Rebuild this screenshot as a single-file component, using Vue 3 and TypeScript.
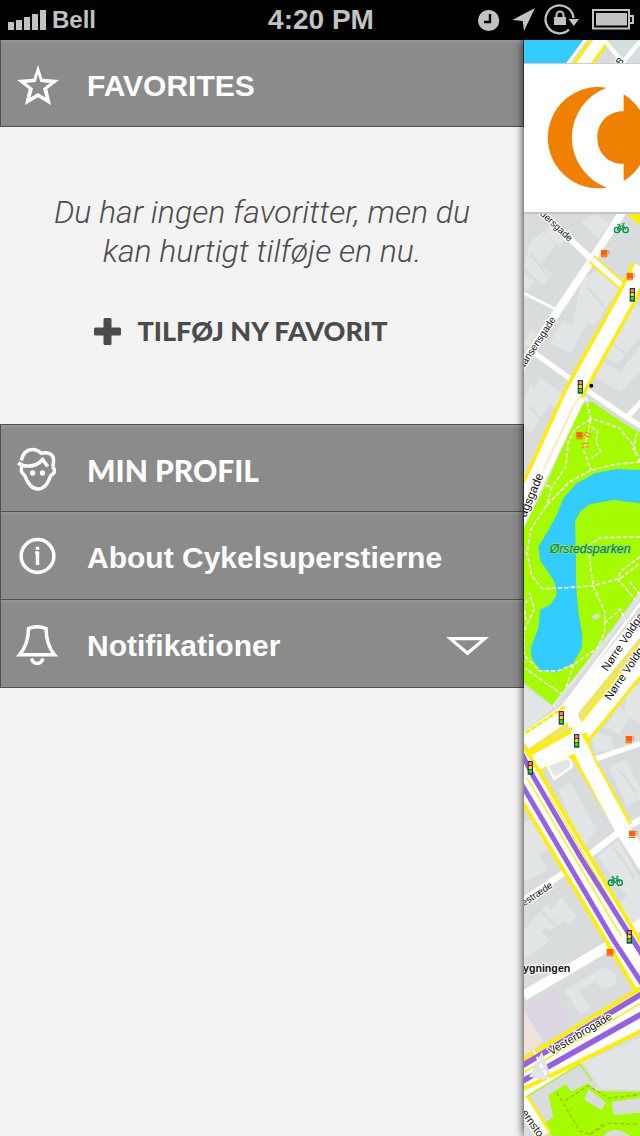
<script setup lang="ts">
interface Spot { x: number; y: number }

const signals: Spot[] = [
  { x: 367, y: 764 }, { x: 211, y: 1040 }, { x: 154, y: 2033 }, { x: 200, y: 2102 },
  { x: 61, y: 2183 }, { x: 358, y: 2690 },
]
const cafes: Spot[] = [
  { x: 283, y: 640 }, { x: 360, y: 709 }, { x: 209, y: 1186 }, { x: 357, y: 2098 },
  { x: 367, y: 2382 }, { x: 300, y: 2737 },
]
const bikes: Spot[] = [{ x: 334, y: 564 }, { x: 316, y: 2522 }]
</script>

<template>
  <div class="screen">
    <div class="status">
      <div class="carrier">
        <svg width="38" height="20" viewBox="0 0 38 20" aria-hidden="true">
          <path d="M0 12h6v8H0zM8 10h6v10H8zM16 7h6v13h-6zM24 4h6v16h-6zM32 0h6v20h-6z" />
        </svg>
        <span>Bell</span>
      </div>
      <time>4:20 PM</time>
      <svg class="indicators" width="158" height="40" viewBox="476 0 158 40" aria-hidden="true">
        <circle cx="488.7" cy="20.5" r="10.6" />
        <path d="M490 14v8h-6" fill="none" stroke="#000" stroke-width="2.4" />
        <path d="M535 8 512.300 20l10.400 1 1.300 10z" />
        <path d="M569 29.700A14 14 0 1 1 573.500 18" fill="none" stroke="#c2c2c2" stroke-width="2.300" />
        <path d="M568.500 19h10.500l-5.200 7z" />
        <path d="M554 17h12v8h-12z" />
        <path d="M556.500 17.500v-2.500a3.500 3.500 0 0 1 7 0v2.500" fill="none" stroke="#c2c2c2" stroke-width="2" />
        <path d="M593 10h36v6h4v7h-4v5.500h-36z" fill="none" stroke="#c2c2c2" stroke-width="2" />
        <path d="M629 15v9" stroke="#c2c2c2" stroke-width="2" />
        <path d="M596 13h31v12.500h-31z" />
      </svg>
    </div>

    <div class="body">
      <aside class="menu">
        <h2 class="row heading">
          <svg class="icon" viewBox="0 0 42 44" aria-hidden="true">
            <path fill="#fff" fill-rule="evenodd" d="M21 4 25.500 17.700 42 19 30.300 28 34 44 21 36.300 8 44 11.700 28 0 19 16.500 17.700zM21 13 18.700 21 9 22 16 27.500 13.500 36.500 21 32 28.500 36.500 26 27.500 33 22 23.300 21z" />
          </svg>
          <span>FAVORITES</span>
        </h2>

        <section class="empty">
          <p>Du har ingen favoritter, men du kan hurtigt tilføje en nu.</p>
          <button type="button" class="add">
            <svg width="27" height="27" viewBox="0 0 27 27" aria-hidden="true">
              <path d="M11 0h5q1.500 0 1.500 1.500v8h8q1.500 0 1.500 1.500v5q0 1.500-1.500 1.500h-8v8q0 1.500-1.500 1.500h-5q-1.500 0-1.500-1.500v-8h-8Q0 17.500 0 16v-5q0-1.500 1.500-1.500h8v-8Q9.500 0 11 0z" fill="#4b4b4b" />
            </svg>
            <span>TILFØJ NY FAVORIT</span>
          </button>
        </section>

        <nav>
          <button type="button" class="row rounded">
            <svg class="icon line" viewBox="0 0 42 44" aria-hidden="true">
              <path d="M4.300 14.500C6 7 10 3.500 15.700 3.500c4 0 6 1.500 8.500 3.700C31 5.500 36 8 36.500 13c.5 3-.5 4.500-.5 7.500" />
              <path d="M1.200 17c5.800 4.500 17.500 4.700 24.500-3.500l5 7" />
              <path d="M5 19.500c-.5 2-1.200 4-.5 6 .7 2.200 2.500 2.500 3.300 4.200C10.500 37 14.500 43 20.700 43c6.300 0 10.300-5.500 12.600-12.500.7-2 3.500-2.300 4-4.700.4-2.300-.3-3.600-1.800-5.300" />
              <circle cx="15.700" cy="27" r="2.700" fill="#fff" stroke="none" />
              <circle cx="25.500" cy="27" r="2.700" fill="#fff" stroke="none" />
            </svg>
            <span>MIN PROFIL</span>
          </button>
          <button type="button" class="row">
            <svg class="icon line" viewBox="0 0 42 44" aria-hidden="true">
              <circle cx="20.500" cy="22" r="16.400" />
              <path d="M20.500 17.500V31" />
              <path d="M18 18.400h3" stroke-width="2" />
              <path d="M20.500 12.800v3" />
            </svg>
            <span>About Cykelsuperstierne</span>
          </button>
          <button type="button" class="row">
            <svg class="icon line" viewBox="0 0 42 44" aria-hidden="true">
              <path d="M11.500 6.500c5-2.300 12.500-2.300 17.500 0 .2 12 3.300 20 8.500 26.300H2.500C8 26.500 11.300 19 11.500 6.500z" />
              <path d="M14.500 36.500c2 6.500 9.500 6.500 11.500 0" />
            </svg>
            <span>Notifikationer</span>
            <svg class="chevron" width="43" height="24" viewBox="0 0 43 24" aria-hidden="true">
              <path fill="#fff" fill-rule="evenodd" d="M0 5h43L21.500 23.500zM8.500 8.300 21.500 19 34.500 8.300z" />
            </svg>
          </button>
        </nav>
      </aside>

      <main class="map">
        <svg class="canvas" viewBox="42 0 348 3288" preserveAspectRatio="xMinYMin slice" role="img" aria-label="Map">
          <rect x="42" width="348" height="3288" fill="#d8dcdd" />
          <g fill="#e1e5e6">
            <path d="M130 545l40 50-22 28-44-48zM60 605l40-30 38 38-44 60 30 32-26 30-56-50zM42 700l30 20-20 32-10-5zM215 545l36-20 52 22-40 48zM215 720l50-32 62 60-75 110-20-10-50 90-62-28 38-68 28 16zM60 870l20 10-25 42-13-8zM300 870l60-90 30 20v90l-65 80-45-20zM262 958l70 38 58-80v80l-55 60-85-46zM90 1012l70 52-25 40-66-50zM62 1030l55 62-54 90-21-30v-70zM345 40l45-30v50zM230 530h40l-38 40z" />
            <path d="M42 1940l90 62-90 70zM350 1960l40-30v120l-30-16-34 48-40-20 40-60 20 12zM235 2070l70 20 8 40-54 6zM145 2250l35-24 80 140-40 60zM42 2350l30-16 50 86-36 26 30 44-74 35zM264 2450l60-50 66 116v160l-30-18-30-70 20-20zM296 2180l50-20 44 80v40l-40 16zM42 2670l70-80 10 20 30-40 48 60-22 26-32-28-50 45 22 30-76 55zM163 2852l112-68 45 15-5 35-40 15-18-25-50 28 35 55-33 15zM220 3065l170-70v155l-120-5zM105 2660l55-35 8 14-52 34z" />
          </g>
          <g fill="none" stroke="#d8dcdd" stroke-width="7">
            <path d="M60 640l55 70M232 740l60 72M295 900l70 55M95 900l46 50M60 1100l40 50M330 2190l50 70M70 2590l80 80M310 2420l65 95" />
          </g>
          <path d="M300 0h90v70h-50z" fill="#d4dfe2" />

          <path d="M42 0h180l-54 70H42z" fill="#3cf" />
          <path d="M232-10l-65 90" stroke="#fff" stroke-width="9" />
          <path d="M280-12 207 88" stroke="#fe0" stroke-width="54" />
          <path d="M280-12 207 88" stroke="#fff" stroke-width="35" />
          <path d="M275-8l75 88M395 0l-55 65" stroke="#fff" stroke-width="13" />

          <g fill="none" stroke="#fff">
            <path d="M42 760l100 50" stroke-width="9" />
            <path d="M80 503l165 155" stroke-width="18" />
            <path d="M348 500 245 660 135 825 32 982" stroke-width="23" />
            <path d="M75 940l125 90 155 105 40 26M350 1133l45-48" stroke-width="16" />
          </g>
          <path d="M245 657l125 110M362 515l35 30" stroke="#fe0" stroke-width="27" />
          <path d="M240 652l130 115" stroke="#fff" stroke-width="17" />

          <path d="M216 1090l30-5 99 67 45 26v474l-50 68-210 278-88-70v-463l70-140z" fill="#a5fb00" />
          <path d="M395 680 355 765 202 1040 180 1085 80 1305 15 1440" fill="none" stroke="#fe0" stroke-width="64" />
          <path d="M395 680 355 765 202 1040 180 1085 80 1305 15 1440" fill="none" stroke="#fff" stroke-width="43" />
          <path d="M218 1074 92 1330 36 1450" fill="none" stroke="#fff" stroke-width="18" />
          <path d="M222 1050 190 1100 100 1290" fill="none" stroke="#fd6" stroke-width="3" />
          <path d="M42 1330l25 12" stroke="#fff" stroke-width="15" />

          <path d="M390 1290l-70-3-65 13-55 30-40 45-20 50-30 55-25 40 5 40 40 60q15 35 5 55l-15 20-30 15-5 55-23 60 3 30 25 35 50 7 50-27 25-45 2-40-12-70-7-80v-80l-3-110 15-30 30-22 70-13 80 10z" fill="#3cf" />
          <g class="trail">
            <path d="M228 1070l14 65 85 28 45 55 18 50M242 1137l-47 30-20 40-8 75-42 60-15 55" />
            <path d="M390 1266l-75 7-72 18-65 35-70 72-45 70-12 70 15 70 30 38 75-3 80-6 80-22 65-50" />
            <path d="M242 1137l-12 60-8 35 21 58M245 1160l18 14-5 32 14 28-28 22M390 1490l-120 3-35 25 5 50 10 70 35 80-2 60-20 45-70 50-50 20-55-1-45-45-3-70 33-70-15-50M55 1680l-15 15 8 45" />
            <path d="M390 1550l-60 45-4 25 50 60M283 1750l48-43 30 70M190 1875l-18 55-12 35-52-35-62-45M390 1665l-35-45" />
            <path d="M380 1180l-10 50 14 20M120 1340l-20-6" />
          </g>
          <path d="M245 1728l20-8 6 12-20 9z" fill="#ddd" />
          <path d="M225 1175l20 10M225 1185l15 7M215 1212l22-2M215 1222l22-2" stroke="#ff8c19" stroke-width="4" />

          <path d="M395 1660l-50 70-215 268" fill="none" stroke="#e1e5e6" stroke-width="9" />
          <path d="M395 1685 150 2010" fill="none" stroke="#fff" stroke-width="8" />
          <path d="M48 2060l120-85" stroke="#fff" stroke-width="4" stroke-dasharray="3 10" />
          <path d="M400 1740 180 2010 42 2105" fill="none" stroke="#fff" stroke-width="50" />
          <path d="M400 1790l-190 235M165 2000 42 2082M180 2048 42 2142" fill="none" stroke="#fe0" stroke-width="9" stroke-dasharray="17 4" />
          <path d="M410 1845 205 2095 60 2175" fill="none" stroke="#fe0" stroke-width="64" />
          <path d="M410 1845 205 2095 60 2175" fill="none" stroke="#fff" stroke-width="46" />
          <path d="M180 2018l30 70" stroke="#fff" stroke-width="40" />
          <path d="M58 2135l130-72" stroke="#fe0" stroke-width="8" stroke-dasharray="28 4" />

          <g fill="none" stroke="#fff">
            <path d="M230 2166l160-55" stroke-width="16" />
            <path d="M400 2334 335 2370 225 2455 42 2580" stroke-width="19" />
            <path d="M400 2647 300 2715 42 2867" stroke-width="30" />
          </g>
          <path d="M100 2182 165 2152q25-10 35 8l136 228M222 2080l16 60 120 215" fill="none" stroke="#fe0" stroke-width="18" />
          <path d="M192 2090q26 45 40 80l108 200 70 110" fill="none" stroke="#fff" stroke-width="46" />
          <path d="M75 2175l120-55" stroke="#fff" stroke-width="36" />
          <path d="M112 2177l55-22q18-2 18 26l-52 36z" fill="#e1e5e6" stroke="#fff" stroke-width="7" />

          <path d="M20 2085 88 2195 410 2737V2905L10 2240z" fill="#fff" stroke="#fe0" stroke-width="11" />
          <path d="M50 2212l285 478M90 2243l210 355M118 2268l213 365" stroke="#fe0" stroke-width="4" />
          <path d="M35 2140 70 2210 212 2452 356 2680 400 2750M32 2228 183 2485 310 2700 400 2837" fill="none" stroke="#9560e3" stroke-width="15" />

          <path d="M45 2910l85-60 55 95-85 60z" fill="#ddd5e1" />
          <path d="M42 2912l58 93-58 45z" fill="#eee2da" />
          <path d="M400 2835 20 3073v75l380-233z" fill="#fff" />
          <path d="M400 2905 20 3130" stroke="#fff" stroke-width="95" />
          <path d="M400 2840 20 3069M400 2970 20 3157" stroke="#fe0" stroke-width="12" />
          <path d="M400 2885 20 3110" stroke="#fe0" stroke-width="5" />
          <path d="M400 2859 20 3087M400 2919 20 3133" stroke="#9560e3" stroke-width="17" />
          <path d="M95 3035l25 65-18 20-45-10z" fill="#e1e5e6" />
          <path d="M70 3030l50 100" fill="none" stroke="#fff" stroke-width="7" stroke-dasharray="15 8" />

          <path d="M42 3175l168-103 35 50" fill="none" stroke="#a5fb00" stroke-width="4" />
          <path d="M115 3165l53-33 15 23 52-25 25 24 130 1v133H125l-20-38 25-20z" fill="#a5fb00" />
          <path d="M235 3147l53 40-13 24-52-32zM305 3185l85-12v45l-80 7zM280 3288q30-38 80 0z" fill="#d8dcdd" />
          <path d="M140 3158l70 115 30 10 55-33 90 2M165 3182l70-45 62 38 93-12M240 3283l45-35" fill="none" stroke="#a8bd00" stroke-width="4" stroke-dasharray="12 7" />
          <path d="M35 3180l68 108" stroke="#fe0" stroke-width="50" />
          <path d="M30 3180l68 108" stroke="#fff" stroke-width="42" />

          <g class="label">
            <text x="330" y="78" font-size="30" transform="rotate(-48 330 78)">B</text>
            <text text-anchor="end" font-size="29" transform="translate(177 606) rotate(43)">dersgade</text>
            <text text-anchor="end" font-size="30" transform="translate(138 838) rotate(-57)">Nansensgade</text>
            <text text-anchor="end" font-size="36" transform="translate(101 1306) rotate(-67)">agsgade</text>
            <text font-size="34" transform="translate(292 1895) rotate(-56)">Nørre Voldga</text>
            <text font-size="34" transform="translate(301 1983) rotate(-56)">Nørre Voldga</text>
            <text text-anchor="end" font-size="29" transform="translate(130 2540) rotate(-34)">estræde</text>
            <text font-size="33" transform="translate(124 3046) rotate(-31)">Vesterbrogade</text>
            <text font-size="33" transform="translate(32 3218) rotate(55)">ernsto</text>
            <text x="181" y="2796" text-anchor="end" font-size="32" font-weight="700">ygningen</text>
            <text class="park" x="119" y="1538" font-size="37">Ørstedsparken</text>
          </g>

          <g v-for="(s, i) in signals" :key="'s' + i" :transform="`translate(${s.x} ${s.y})`">
            <rect x="-8" y="-20" width="16" height="41" fill="#333" />
            <rect x="-5" y="-17" width="10" height="10" rx="3" fill="#ff6f86" />
            <rect x="-5" y="-5" width="10" height="10" rx="3" fill="#fd0" />
            <rect x="-5" y="7" width="10" height="10" rx="3" fill="#0e3" />
          </g>
          <g v-for="(c, i) in cafes" :key="'c' + i" :transform="`translate(${c.x} ${c.y})`">
            <path d="M-10-10H9V7H-10zM-10 9H9v3h-19z" fill="#ff6400" />
            <path d="M9-7h5V1L9 4" fill="none" stroke="#ff6400" stroke-width="2" />
          </g>
          <g v-for="(b, i) in bikes" :key="'b' + i" :transform="`translate(${b.x} ${b.y})`" fill="none" stroke="#009245" stroke-width="4">
            <circle cx="-13" cy="6" r="8" />
            <circle cx="13" cy="6" r="8" />
            <path d="M-13 6-7-6H6L0 6zM-8-12l8 18M13 6 4-13h6M-12-11h8" stroke-width="3" />
          </g>
          <circle cx="244" cy="1037" r="6" />
        </svg>

        <header class="brand">
          <svg width="116" height="148" viewBox="44 71 348 444" role="img" aria-label="Cykelsuperstierne">
            <g fill="#f08000">
              <path d="M292 142A160 160 0 0 0 292 442A152 152 0 1 1 292 142z" />
              <path d="M343 162A152 152 0 0 1 343 422V370C300 372 264 340 264 292S300 212 343 213z" />
            </g>
          </svg>
        </header>
      </main>
    </div>
  </div>
</template>

<style>
body {
  margin: 0;
}
</style>

<style scoped>
.screen {
  display: flex;
  flex-direction: column;
  min-height: 100vh;
  background: #f3f3f3;
  font-family: "Liberation Sans", Arial, sans-serif;
}
.status {
  display: grid;
  grid-template-columns: 1fr auto 1fr;
  align-items: center;
  height: 40px;
  padding: 0 6px 0 8px;
  background: #000;
  color: #c2c2c2;
  font-size: 28px;
  font-weight: 700;
}
.status svg {
  fill: #c2c2c2;
}
.carrier {
  display: flex;
  align-items: center;
  gap: 6px;
  font-size: 24px;
}
.indicators {
  justify-self: end;
}
.body {
  display: flex;
  flex: 1;
}
.menu {
  flex: 1;
  min-width: 0;
}
.row {
  display: flex;
  align-items: center;
  gap: 28px;
  box-sizing: border-box;
  width: 100%;
  height: 88px;
  margin: 0;
  padding: 0 34px 0 16px;
  border: solid #505050;
  border-width: 0 1px 1px;
  border-radius: 0;
  background: #8b8b8b;
  box-shadow: inset 0 2px 2px #999;
  color: #fff;
  font-family: inherit;
  font-size: 30px;
  font-weight: 700;
  text-align: left;
}
.heading {
  height: 87px;
}
.row:first-child:not(.heading) {
  border-top-width: 1px;
}
.rounded,
.add {
  font-family: Lato, "Liberation Sans", sans-serif;
}
.rounded {
  font-weight: 900;
}
.row span {
  padding-top: 4px;
}
.heading span {
  padding-top: 6px;
}
.icon {
  flex: none;
  width: 42px;
  height: 44px;
  overflow: visible;
}
.line {
  fill: none;
  stroke: #fff;
  stroke-width: 3.5;
}
.chevron {
  margin-left: auto;
}
.empty {
  display: flex;
  flex-direction: column;
  align-items: center;
  gap: 42px;
  box-sizing: border-box;
  height: 297px;
  padding: 66px 40px 0;
  color: #4b4b4b;
}
.empty p {
  max-width: 440px;
  margin: 0;
  font-family: Roboto, "Liberation Sans", sans-serif;
  font-size: 32px;
  font-style: italic;
  font-weight: 300;
  line-height: 39px;
  text-align: center;
}
.add {
  display: flex;
  align-items: center;
  gap: 16px;
  margin-right: 42px;
  padding: 0;
  border: 0;
  background: none;
  color: inherit;
  font-size: 27px;
  font-weight: 900;
  line-height: 36px;
}
.map {
  position: relative;
  flex: 0 0 116px;
  padding-top: 23px;
  background: #d8dcdd;
  box-shadow: 0 0 9px rgba(0, 0, 0, 0.9);
  clip-path: inset(0 0 0 -12px);
}
.canvas {
  position: absolute;
  inset: 0;
  width: 100%;
  height: 100%;
}
.brand {
  position: relative;
  border-top: 1px solid #ccc;
  border-bottom: 2px solid #c4c4c4;
  background: #fff;
}
.brand svg {
  display: block;
}
.trail {
  fill: none;
  stroke: #fff;
  stroke-width: 5;
  stroke-dasharray: 13 6;
}
.label text {
  fill: #111;
  stroke: #fff;
  stroke-width: 7;
  stroke-linejoin: round;
  paint-order: stroke;
}
.label .park {
  fill: #1b7a1b;
  stroke: #7be08a;
  stroke-width: 5;
  font-style: italic;
}
</style>
